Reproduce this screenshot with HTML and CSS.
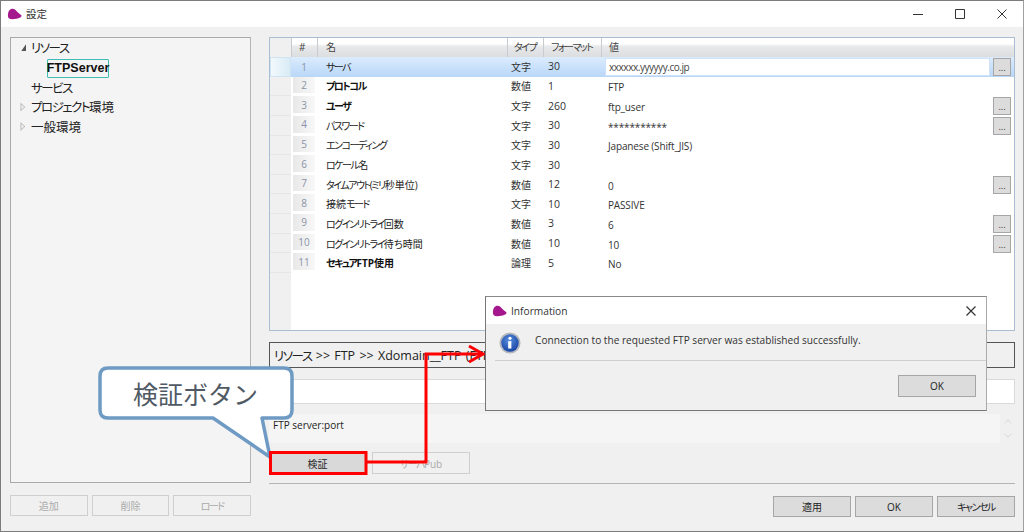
FILE: index.html
```html
<!DOCTYPE html>
<html lang="ja">
<head>
<meta charset="utf-8">
<title>設定</title>
<link rel="stylesheet" href="styles.css">
</head>
<body>
<div class="window">
  <header class="titlebar">
    <svg class="logo" viewBox="0 0 16 12"><path d="M1 8C1 3 3 .5 6 .5c3 0 5 4 9 6.500 .8.600.5 2-.5 2.500-3 1.500-6 2-9 2C3 11.500 1 10.500 1 8z"/></svg>
    <span class="title-text">設定</span>
    <div class="win-controls">
      <svg viewBox="0 0 10 10"><path d="M0 5.500h10"/></svg>
      <svg viewBox="0 0 10 10"><path d="M.5.500h9v9h-9z"/></svg>
      <svg viewBox="0 0 10 10"><path d="M.5.500l9 9M9.500.500l-9 9"/></svg>
    </div>
  </header>

  <main class="content">
    <aside class="left-col">
      <nav class="tree">
        <div class="tree-row"><span class="tw open"></span><span class="k">リソース</span></div>
        <div class="tree-row child"><span class="tree-sel">FTPServer</span></div>
        <div class="tree-row"><span class="tw none"></span><span class="k">サービス</span></div>
        <div class="tree-row"><span class="tw closed"></span><span class="k">プロジェクト</span>環境</div>
        <div class="tree-row"><span class="tw closed"></span>一般環境</div>
      </nav>
      <div class="btn-row left-btns">
        <button class="btn off">追加</button>
        <button class="btn off">削除</button>
        <button class="btn off"><span class="k">ロード</span></button>
      </div>
    </aside>

    <section class="right-col">
      <div class="grid">
        <div class="row head">
          <div class="gut"></div><div class="hc hn">#</div><div class="hc">名</div><div class="hc"><span class="k">タイプ</span></div><div class="hc"><span class="k">フォーマット</span></div><div class="hc">値</div>
        </div>
        <div class="row sel">
          <div class="gut"></div><div class="num"><span>1</span></div><div class="nm k">サーバ</div><div class="ty">文字</div><div class="fm">30</div>
          <div class="val"><span class="edit">xxxxxx.yyyyyy.co.jp</span><span class="more">...</span></div>
        </div>
        <div class="row">
          <div class="gut"></div><div class="num"><span>2</span></div><div class="nm b k">プロトコル</div><div class="ty">数値</div><div class="fm">1</div><div class="val"><span class="vt">FTP</span></div>
        </div>
        <div class="row">
          <div class="gut"></div><div class="num"><span>3</span></div><div class="nm b k">ユーザ</div><div class="ty">文字</div><div class="fm">260</div><div class="val"><span class="vt">ftp_user</span><span class="more">...</span></div>
        </div>
        <div class="row">
          <div class="gut"></div><div class="num"><span>4</span></div><div class="nm k">パスワード</div><div class="ty">文字</div><div class="fm">30</div><div class="val"><span class="vt">***********</span><span class="more">...</span></div>
        </div>
        <div class="row">
          <div class="gut"></div><div class="num"><span>5</span></div><div class="nm k">エンコーディング</div><div class="ty">文字</div><div class="fm">30</div><div class="val"><span class="vt">Japanese (Shift_JIS)</span></div>
        </div>
        <div class="row">
          <div class="gut"></div><div class="num"><span>6</span></div><div class="nm"><span class="k">ロケール</span>名</div><div class="ty">文字</div><div class="fm">30</div><div class="val"></div>
        </div>
        <div class="row">
          <div class="gut"></div><div class="num"><span>7</span></div><div class="nm"><span class="k">タイムアウト(ミリ</span>秒単位)</div><div class="ty">数値</div><div class="fm">12</div><div class="val"><span class="vt">0</span><span class="more">...</span></div>
        </div>
        <div class="row">
          <div class="gut"></div><div class="num"><span>8</span></div><div class="nm">接続<span class="k">モード</span></div><div class="ty">文字</div><div class="fm">10</div><div class="val"><span class="vt">PASSIVE</span></div>
        </div>
        <div class="row">
          <div class="gut"></div><div class="num"><span>9</span></div><div class="nm"><span class="k">ログインリトライ</span>回数</div><div class="ty">数値</div><div class="fm">3</div><div class="val"><span class="vt">6</span><span class="more">...</span></div>
        </div>
        <div class="row">
          <div class="gut"></div><div class="num"><span>10</span></div><div class="nm"><span class="k">ログインリトライ</span>待ち時間</div><div class="ty">数値</div><div class="fm">10</div><div class="val"><span class="vt">10</span><span class="more">...</span></div>
        </div>
        <div class="row">
          <div class="gut"></div><div class="num"><span>11</span></div><div class="nm b"><span class="k">セキュア</span>FTP使用</div><div class="ty">論理</div><div class="fm">5</div><div class="val"><span class="vt">No</span></div>
        </div>
        <div class="grid-rest"><div class="gut"></div></div>
      </div>

      <div class="path"><span class="k">リソース</span>&nbsp;&gt;&gt; FTP &gt;&gt; Xdomain__FTP (FTP)</div>
      <div class="input"></div>
      <div class="desc-wrap">
        <div class="desc">FTP server:port</div>
        <div class="chev">
          <svg viewBox="0 0 10 6"><path d="M1 5l4-4 4 4"/></svg>
          <svg viewBox="0 0 10 6"><path d="M1 1l4 4 4-4"/></svg>
        </div>
      </div>
      <div class="action-btns">
        <button class="btn verify">検証</button>
        <button class="btn off pub"><span class="k">サーバ</span>Pub</button>
      </div>
      <div class="btn-row right-btns">
        <button class="btn">適用</button>
        <button class="btn">OK</button>
        <button class="btn"><span class="k">キャンセル</span></button>
      </div>
    </section>
  </main>
</div>

<svg class="annot" viewBox="0 0 1024 532">
  <path class="bubble" d="M108 368H284Q292 368 292 376V410Q292 418 284 418H262L270 457L213 418H108Q100 418 100 410V376Q100 368 108 368Z"/>
  <path class="red" d="M270.500 452.500H366V473.500H270.500Z"/>
  <path class="red" d="M366 462H426V354H482"/>
  <path class="red" d="M469 346L483 354L469 362"/>
</svg>
<div class="bubble-text">検証ボタン</div>

<div class="dialog">
  <div class="dlg-title">
    <svg class="logo" viewBox="0 0 16 12"><path d="M1 8C1 3 3 .5 6 .5c3 0 5 4 9 6.500 .8.600.5 2-.5 2.500-3 1.500-6 2-9 2C3 11.500 1 10.500 1 8z"/></svg>
    <span>Information</span>
    <svg class="dlg-x" viewBox="0 0 10 10"><path d="M.5.500l9 9M9.500.500l-9 9"/></svg>
  </div>
  <div class="dlg-msg">
    <svg class="info" viewBox="0 0 24 24">
      <defs><radialGradient id="ib" cx=".45" cy=".35" r=".75"><stop offset="0" stop-color="#5b8fe0"/><stop offset="1" stop-color="#0e3a9c"/></radialGradient></defs>
      <circle cx="12" cy="12" r="11.500" fill="#b4b8bd"/>
      <circle cx="12" cy="12" r="9.500" fill="url(#ib)"/>
      <circle cx="12" cy="6.800" r="1.700" fill="#fff"/>
      <path d="M10 10h3.500v8H10z" fill="#fff"/>
    </svg>
    <span>Connection to the requested FTP server was established successfully.</span>
  </div>
  <div class="dlg-foot"><button class="btn dlg-ok">OK</button></div>
</div>
</body>
</html>
```

FILE: styles.css
```css
* { box-sizing: border-box; }
html, body { margin: 0; height: 100%; overflow: hidden; }
body {
  width: 1024px; height: 532px; position: relative; background: #f0f0f0;
  font-family: "Open Sans", "Noto Sans CJK JP", sans-serif;
  font-size: 10px; color: #222;
  font-feature-settings: "palt";
}
.k { letter-spacing: -1.500px; }
.window {
  width: 1024px; height: 532px; display: flex; flex-direction: column;
  border: 1px solid #7c7c7c; border-right-color: #a0a0a0;
}
.titlebar {
  height: 26px; background: #fff; display: flex; align-items: center; padding-left: 6px; flex: none;
}
.logo { width: 15px; height: 12px; fill: #a5178c; flex: none; }
.title-text { margin-left: 4px; font-size: 10.500px; color: #333; padding-bottom: 2px; }
.win-controls { margin-left: auto; display: flex; gap: 32px; padding-right: 16px; padding-bottom: 1px; }
.win-controls svg { width: 10px; height: 10px; fill: none; stroke: #333; stroke-width: 1; }

.content { flex: 1; display: flex; padding: 10px 8px 14px 9px; gap: 18px; min-height: 0; }
.left-col { width: 241px; display: flex; flex-direction: column; }
.right-col { width: 746px; display: flex; flex-direction: column; }

.tree {
  height: 446px; background: #f4f4f4; border: 1px solid #a9a9a9; border-right-color: #b4b4b4;
  font-size: 12.500px; color: #222;
}
.tree-row { height: 19.700px; display: flex; align-items: center; padding-left: 8px; }
.tree-row.child { padding-left: 36px; }
.tw { width: 7px; height: 7px; margin-right: 5px; flex: none; }
.tw.open { background: #555; clip-path: polygon(100% 0, 100% 100%, 30% 100%); }
.tw.closed {
  height: 9px; background: #bbb;
  clip-path: polygon(20% 0, 90% 50%, 20% 100%, 20% 0, 35% 22%, 35% 78%, 72% 50%, 35% 22%);
}
.tree-sel {
  border: 1px solid #3fbfb4; border-radius: 1px; height: 19px; width: 62px; margin-top: 1px;
  display: flex; align-items: center; justify-content: center;
  font-family: "Liberation Sans", sans-serif; font-weight: 700; font-size: 12.500px; color: #111;
}
.btn-row { display: flex; margin-top: 12px; height: 21px; }
.left-btns { gap: 4px; }
.btn {
  font: inherit; color: #222; background: #dcdcdc; border: 1px solid #a6a6a6; padding: 0; width: 78px;
  font-feature-settings: inherit;
}
.btn.off { background: #f0f0f0; border-color: #cfcfcf; color: #aaa; }

.grid {
  height: 294px; background: #fff; border: 1px solid #a9bed3; display: flex; flex-direction: column; flex: none;
}
.row {
  height: 19.650px; flex: none; display: grid; grid-template-columns: 21px 26px 190px 36px 58px 1fr; align-items: center;
}
.gut { background: #f0f0f0; height: 100%; border-bottom: 1px solid #e6e6e6; }
.grid-rest { flex: 1; }
.grid-rest .gut { width: 21px; border: 0; }
.head { height: 19px; background: linear-gradient(#fff 0, #fff 30%, #e8e9ea 45%, #dcdddf 100%); }
.head .gut { border: 0; background: #f0f0f0; }
.hc { height: 100%; display: flex; align-items: center; padding-left: 8px; padding-bottom: 2px; border-left: 1px solid #c9cccf; color: #444; }
.hn { padding-left: 7px; }
.hc + .hc + .hc { padding-left: 6px; }
.hc + .hc + .hc + .hc { padding-left: 7px; }
.num { height: 100%; padding: 0 2px 3px; }
.num span { display: flex; align-items: center; justify-content: center; height: 100%; background: linear-gradient(90deg, #e8e8e8, #f8f8f8); color: #8b93a8; }
.nm { padding: 0 0 1px 9px; color: #222; }
.nm.k { letter-spacing: -1.500px; }
.b { font-weight: 700; color: #111; }
.ty { padding: 0 0 1px 4px; color: #333; font-feature-settings: normal; }
.fm { padding: 0 0 1px 5px; color: #333; font-size: 10.500px; }
.val { display: flex; align-items: center; height: 100%; padding-left: 7px; padding-right: 3px; color: #333; }
.vt { padding-top: 2px; letter-spacing: -.150px; }
.more {
  margin-left: auto; width: 18px; height: 18px; background: #dcdcdc; border: 1px solid #a6a6a6;
  display: flex; align-items: flex-end; justify-content: center; line-height: 14px; font-size: 9px; color: #333; flex: none;
}
.sel { background: linear-gradient(#dcecfd, #b8d7f8); }
.sel .gut { background: linear-gradient(90deg, #f2f9fd, #d8ebf5); border: 1px solid #cfe3f0; }
.sel .num { padding: 0; }
.sel .num span { background: none; }
.sel .val { padding-left: 4px; }
.edit {
  flex: 1; height: 18px; background: #fff; margin-right: 3px; border: 1px solid #cfe2fa; padding-left: 3px;
  display: flex; align-items: center; color: #444; letter-spacing: -.450px;
}

.path {
  margin-top: 11px; height: 26px; border: 1px solid #555; background: #f0f0f0; flex: none;
  display: flex; align-items: center; padding-left: 4px; font-size: 12.500px; word-spacing: 1px;
}
.input { margin-top: 11px; height: 25px; background: #fff; border: 1px solid #d9d9d9; flex: none; }
.desc-wrap { margin-top: 10px; height: 29px; display: flex; flex: none; }
.desc { width: 731px; background: #f5f5f5; padding: 4px 4px 0; }
.chev { flex: 1; display: flex; flex-direction: column; align-items: center; gap: 9px; padding-top: 5px; }
.chev svg { width: 8px; height: 5px; fill: none; stroke: #d0d0d0; stroke-width: 1; }
.action-btns { margin-top: 9px; height: 32px; padding-bottom: 9px; display: flex; gap: 6px; border-bottom: 1px solid #b5b5b5; flex: none; }
.verify { width: 97px; background: #d9d9d9; }
.pub { width: 98px; }
.right-btns { justify-content: flex-end; gap: 4px; }

.annot { position: absolute; left: 0; top: 0; width: 1024px; height: 532px; fill: none; }
.bubble { fill: #fff; stroke: #6e9ac3; stroke-width: 3.500; stroke-linejoin: round; }
.red { stroke: #f00; stroke-width: 3; }
.bubble-text {
  position: absolute; left: 133px; top: 376px; font-size: 25px; line-height: 34px; color: #505a64;
  font-family: "Noto Sans CJK JP", sans-serif; font-feature-settings: normal;
}

.dialog {
  position: absolute; left: 485px; top: 296px; width: 502px; height: 115px;
  background: #f0f0f0; border: 1px solid #777; border-top-color: #8a8a8a; border-right-color: #aaa; display: flex; flex-direction: column;
}
.dlg-title { height: 27px; background: #fff; display: flex; align-items: center; padding-left: 6px; gap: 4px; font-size: 10.200px; color: #333; flex: none; }
.dlg-x { width: 10px; height: 10px; margin-left: auto; margin-right: 10px; fill: none; stroke: #333; stroke-width: 1.200; }
.dlg-msg { height: 37px; margin-left: 9px; display: flex; align-items: flex-start; padding: 8px 0 0 4px; gap: 14px; border-bottom: 1px solid #cfcfcf; flex: none; }
.dlg-msg span { line-height: 16px; font-size: 10.150px; color: #333; }
.info { width: 22px; height: 22px; flex: none; }
.dlg-foot { flex: 1; display: flex; justify-content: flex-end; padding: 14px 10px 0 0; }
.dlg-ok { width: 78px; height: 22px; }
```
